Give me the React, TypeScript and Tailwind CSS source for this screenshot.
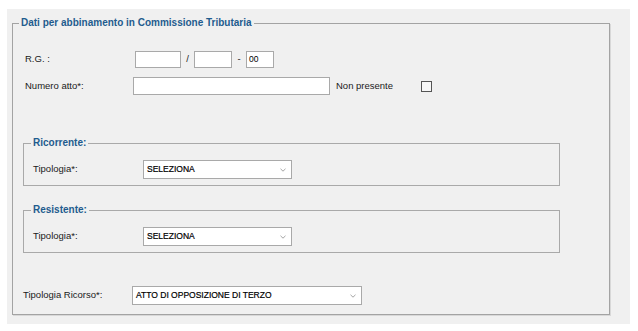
import React from 'react';

const font = "font-['Liberation_Sans',Arial,sans-serif]";

function Select({ value, width }: { value: string; width: string }) {
  return (
    <div
      className={`${width} h-[19px] border border-[#a9a9a9] bg-white flex items-center justify-between pl-[3px] pr-[5px]`}
    >
      <span className="text-[8.5px] text-black [-webkit-text-stroke:0.2px_black]">{value}</span>
      <svg width="6" height="4" viewBox="0 0 6 4" fill="none">
        <polyline points="0.5,0.8 3,3.2 5.5,0.8" stroke="#9a9a9a" strokeWidth="0.9" />
      </svg>
    </div>
  );
}

function SubSection({ title, className = '' }: { title: string; className?: string }) {
  return (
    <fieldset className={`w-[537px] border border-[#a9a9a9] ${className}`}>
      <legend className="ml-[7px] px-[2px] text-[10px] leading-[12px] font-bold text-[#1f5c8e]">
        {title}
      </legend>
      <div className="pl-[9px] pt-[11px] pb-[6px]">
        <div className="flex items-center h-[19px]">
          <div className="w-[110px] text-[9.5px] text-[#1a1a1a]">Tipologia*:</div>
          <Select value="SELEZIONA" width="w-[149px]" />
        </div>
      </div>
    </fieldset>
  );
}

export default function App() {
  return (
    <div className={`min-h-screen bg-white pt-[9px] pl-[7px] ${font}`}>
      <div className="w-[623px] h-[315px] bg-[#f0f0f0] pt-[8px] pl-[5px]">
        <fieldset className="w-[598px] h-[298px] border border-[#a3a3a3] shadow-[1px_1px_0_#d8d8d8]">
          <legend className="ml-[6px] px-[2px] text-[10px] leading-[12px] font-bold text-[#1f5c8e]">
            Dati per abbinamento in Commissione Tributaria
          </legend>

          <div className="pl-[10px]">
            {/* R.G. */}
            <div className="flex items-center h-[17px] mt-[22px]">
              <div className="w-[112px] pl-[2px] text-[9.5px] text-[#1a1a1a]">R.G. :</div>
              <div className="w-[46px] h-[17px] border border-[#a9a9a9] bg-white" />
              <span className="w-[13px] text-center text-[9.5px] text-[#1a1a1a]">/</span>
              <div className="w-[38px] h-[17px] border border-[#a9a9a9] bg-white" />
              <span className="w-[14px] text-center text-[9.5px] text-[#1a1a1a]">-</span>
              <div className="w-[28px] h-[17px] border border-[#a9a9a9] bg-white flex items-center pl-[2px] text-[8.5px] text-black">
                00
              </div>
            </div>

            {/* Numero atto */}
            <div className="flex items-center h-[18px] mt-[9px]">
              <div className="w-[110px] pl-[2px] text-[9.5px] text-[#1a1a1a]">Numero atto*:</div>
              <div className="w-[197px] h-[18px] border border-[#a9a9a9] bg-white" />
              <div className="w-[91px] pl-[6px] text-[9.5px] text-[#1a1a1a]">Non presente</div>
              <div className="w-[11px] h-[11px] border border-[#555] bg-[#f7f7f7]" />
            </div>

            <SubSection title="Ricorrente:" className="mt-[42px]" />
            <SubSection title="Resistente:" className="mt-[18px]" />

            {/* Tipologia Ricorso */}
            <div className="flex items-center h-[19px] mt-[33px]">
              <div className="w-[109px] text-[9.5px] text-[#1a1a1a]">Tipologia Ricorso*:</div>
              <Select value="ATTO DI OPPOSIZIONE DI TERZO" width="w-[230px]" />
            </div>
          </div>
        </fieldset>
      </div>
    </div>
  );
}
